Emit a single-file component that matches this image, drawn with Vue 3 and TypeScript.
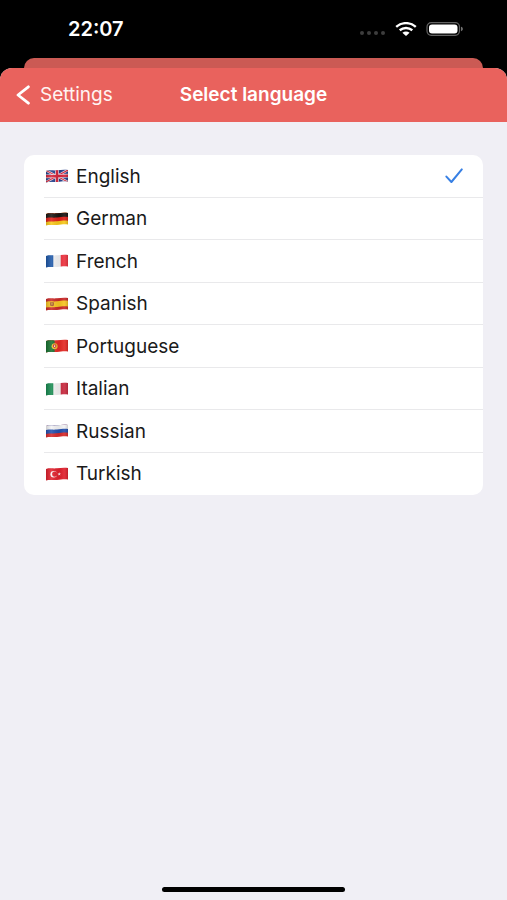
<script setup lang="ts">
import { ref } from 'vue'

interface Language {
  code: string
  name: string
}

const languages: Language[] = [
  { code: 'gb', name: 'English' },
  { code: 'de', name: 'German' },
  { code: 'fr', name: 'French' },
  { code: 'es', name: 'Spanish' },
  { code: 'pt', name: 'Portuguese' },
  { code: 'it', name: 'Italian' },
  { code: 'ru', name: 'Russian' },
  { code: 'tr', name: 'Turkish' },
]

const selected = ref('gb')
</script>

<template>
  <div class="screen">
    <div class="status">
      <time class="clock">22:07</time>
      <div class="indicators">
        <svg class="cellular" viewBox="0 0 26 4" aria-hidden="true">
          <circle cx="2" cy="2" r="2" /><circle cx="9" cy="2" r="2" />
          <circle cx="16" cy="2" r="2" /><circle cx="23" cy="2" r="2" />
        </svg>
        <svg class="wifi" viewBox="0 0 22 14" aria-hidden="true">
          <path d="M1.2 4.8C6.8-.1 15.2-.1 20.8 4.8" />
          <path d="M4.7 8.3c3.7-3 8.9-3 12.6 0" />
          <path class="wifi-dot" d="M7.4 10.8c2.2-1.7 5-1.7 7.2 0L11 14z" />
        </svg>
        <svg class="battery" viewBox="0 0 38 14" aria-hidden="true">
          <rect class="battery-case" x="1" y=".7" width="32.5" height="12.6" rx="4.2" />
          <rect class="battery-fill" x="3" y="2.4" width="28.5" height="9.2" rx="3" />
          <path class="battery-tip" d="M35 4.8c2.5.6 2.5 3.8 0 4.4z" />
        </svg>
      </div>
    </div>
    <div class="under-sheet"></div>

    <section class="sheet">
      <header class="bar">
        <a class="back" href="#settings">
          <svg class="chevron" viewBox="0 0 14 20" aria-hidden="true">
            <path d="M12.4 1.8 2 10l10.4 8.2" />
          </svg>
          <span>Settings</span>
        </a>
        <h1 class="title">Select language</h1>
      </header>

      <main class="content">
        <div class="list" role="radiogroup" aria-label="Select language">
          <label v-for="lang in languages" :key="lang.code" class="row">
            <input v-model="selected" class="radio" type="radio" name="language" :value="lang.code" />
            <svg class="flag" viewBox="0 0 22 14" aria-hidden="true">
              <defs>
                <clipPath :id="`wave-${lang.code}`">
                  <path d="M0 1.9C4 .8 7 1.7 11 1.3S18 .3 22 1v11.5c-4-.7-7 .1-11 .5s-7-.4-11 .4z" />
                </clipPath>
                <linearGradient :id="`shade-${lang.code}`">
                  <stop offset="0" stop-color="#000" stop-opacity=".16" />
                  <stop offset=".25" stop-color="#fff" stop-opacity=".12" />
                  <stop offset=".6" stop-color="#000" stop-opacity=".06" />
                  <stop offset=".82" stop-color="#fff" stop-opacity=".08" />
                  <stop offset="1" stop-color="#000" stop-opacity=".16" />
                </linearGradient>
              </defs>
              <g :clip-path="`url(#wave-${lang.code})`">
                <template v-if="lang.code === 'gb'">
                  <path fill="#24418c" d="M0 0h22v14H0z" />
                  <path stroke="#f3e6ec" stroke-width="2.4" d="m0 1.5 22 11.5M0 13 22 1" />
                  <path stroke="#d4253c" stroke-width="1.1" d="m0 1.5 22 11.5M0 13 22 1" />
                  <path stroke="#f3e6ec" stroke-width="3.8" d="M11 0v14M0 7.3 22 6.7" />
                  <path stroke="#d4253c" stroke-width="2.4" d="M11 0v14M0 7.3 22 6.7" />
                </template>
                <template v-else-if="lang.code === 'de'">
                  <path fill="#f8c91c" d="M0 0h22v14H0z" />
                  <path fill="#df1f19" d="M0 0h22v8.7c-4-.7-7 .2-11 .6s-7-.3-11 .6z" />
                  <path fill="#191512" d="M0 0h22v4.9c-4-.7-7 .2-11 .6s-7-.3-11 .6z" />
                </template>
                <template v-else-if="lang.code === 'fr'">
                  <path fill="#f3f3f5" d="M0 0h22v14H0z" />
                  <path fill="#1d57a8" d="M0 0h7.3v14H0z" />
                  <path fill="#ed3340" d="M14.7 0H22v14h-7.3z" />
                </template>
                <template v-else-if="lang.code === 'es'">
                  <path fill="#cb2928" d="M0 0h22v14H0z" />
                  <path fill="#f8c522" d="M0 4.8c4-1 7-.1 11-.5s7-1.2 11-.5v5.8c-4-.7-7 .1-11 .5s-7-.4-11 .5z" />
                  <path fill="#a7592c" d="M4.1 5.3h3.8v3.3q-1.9 1.5-3.8 0z" />
                  <path fill="#d9a13c" d="M5.4 6h1.2v1.8H5.4z" />
                </template>
                <template v-else-if="lang.code === 'pt'">
                  <path fill="#e52924" d="M0 0h22v14H0z" />
                  <path fill="#17702f" d="M0 0h8.6v14H0z" />
                  <circle cx="8.6" cy="7.2" r="3" fill="#e8bd32" />
                  <path fill="#d32c2b" d="M7 5.5h3.2v2.3q-1.6 2.2-3.2 0z" />
                  <path fill="#f3e7e0" d="M8 6.2h1.2v1.7H8z" />
                </template>
                <template v-else-if="lang.code === 'it'">
                  <path fill="#f3f3f3" d="M0 0h22v14H0z" />
                  <path fill="#178a50" d="M0 0h7.3v14H0z" />
                  <path fill="#c92b40" d="M14.7 0H22v14h-7.3z" />
                </template>
                <template v-else-if="lang.code === 'ru'">
                  <path fill="#d72a2b" d="M0 0h22v14H0z" />
                  <path fill="#234fae" d="M0 0h22v8.7c-4-.7-7 .2-11 .6s-7-.3-11 .6z" />
                  <path fill="#f3f3f5" d="M0 0h22v4.9c-4-.7-7 .2-11 .6s-7-.3-11 .6z" />
                </template>
                <template v-else>
                  <path fill="#e1202d" d="M0 0h22v14H0z" />
                  <circle cx="7.7" cy="7.2" r="3.3" fill="#fbeff0" />
                  <circle cx="8.7" cy="7.1" r="2.6" fill="#e1202d" />
                  <path fill="#fbeff0" d="m13.3 5.3.4 1.2 1.3.1-1 .7.3 1.2-1-.7-1.1.7.3-1.2-1-.7 1.3-.1z" />
                </template>
                <path :fill="`url(#shade-${lang.code})`" d="M0 0h22v14H0z" />
              </g>
            </svg>
            <span class="name">{{ lang.name }}</span>
            <svg v-if="selected === lang.code" class="check" viewBox="0 0 18 16" aria-hidden="true">
              <path d="m1.4 8.6 5 5.4L16.8 1.4" />
            </svg>
          </label>
        </div>
      </main>

      <div class="home"></div>
    </section>
  </div>
</template>

<style>
body {
  margin: 0;
  background: #000;
}
</style>

<style scoped>
.screen {
  display: flex;
  flex-direction: column;
  min-height: 100vh;
  background: #000;
  color: #1a1a1a;
  font-family: Inter, "Liberation Sans", sans-serif;
  font-size: 19px;
  line-height: 24px;
}

.status {
  display: flex;
  justify-content: space-between;
  align-items: center;
  height: 58px;
  box-sizing: border-box;
  padding: 0 43px 0 68px;
  color: #fff;
}

.clock {
  font-size: 20px;
  font-weight: 600;
}

.indicators {
  display: flex;
  align-items: center;
  gap: 9px;
}

.cellular {
  width: 26px;
  height: 4px;
  margin-top: 8px;
  fill: #3d3d3d;
}

.wifi {
  width: 22px;
  height: 14px;
  fill: none;
  stroke: #fff;
  stroke-width: 2.4;
}

.wifi-dot {
  fill: #fff;
  stroke: none;
}

.battery {
  width: 38px;
  height: 14px;
}

.battery-case {
  fill: none;
  stroke: #626262;
  stroke-width: 1.2;
}

.battery-fill {
  fill: #fff;
}

.battery-tip {
  fill: #707070;
}

.under-sheet {
  height: 10px;
  margin: 0 24px;
  border-radius: 10px 10px 0 0;
  background: #cb5a54;
}

.sheet {
  display: flex;
  flex: 1;
  flex-direction: column;
  overflow: hidden;
  border-radius: 12px 12px 0 0;
  background: #f0eff5;
}

.bar {
  display: grid;
  grid-template-columns: 1fr auto 1fr;
  align-items: center;
  height: 54px;
  padding: 0 16px;
  background: #e9625d;
  color: #fff;
}

.back {
  display: flex;
  align-items: center;
  gap: 10px;
  color: #fff4f2;
  text-decoration: none;
}

.chevron {
  width: 14px;
  height: 20px;
  fill: none;
  stroke: #fff;
  stroke-width: 2.8;
  stroke-linecap: round;
  stroke-linejoin: round;
}

.title {
  margin: 0;
  font-size: 19px;
  font-weight: 600;
}

.content {
  flex: 1;
  padding: 33px 24px;
}

.list {
  display: grid;
  grid-auto-rows: 1fr;
  min-height: 340px;
  border-radius: 10px;
  background: #fff;
}

.row {
  position: relative;
  display: flex;
  align-items: center;
  gap: 8px;
  margin-left: 20px;
  padding: 0 20px 0 2px;
  cursor: pointer;
}

.row + .row {
  box-shadow: 0 -1px #e9e9eb;
}

.radio {
  position: absolute;
  inset: 0;
  margin: 0;
  opacity: 0;
}

.flag {
  width: 22px;
  height: 14px;
}

.name {
  flex: 1;
  padding-top: 1px;
}

.check {
  width: 18px;
  height: 16px;
  fill: none;
  stroke: #3880e4;
  stroke-width: 2;
  stroke-linecap: round;
  stroke-linejoin: round;
}

.home {
  width: 36%;
  height: 5px;
  margin: 0 auto 8px;
  border-radius: 3px;
  background: #000;
}
</style>
